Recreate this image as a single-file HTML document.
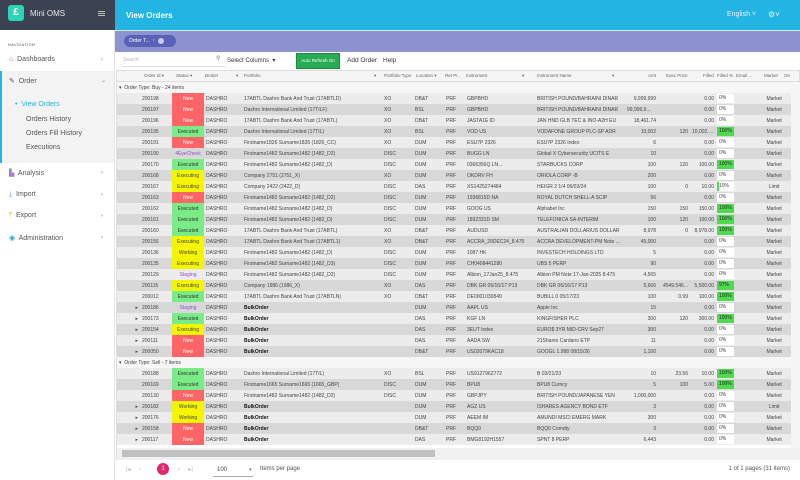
<!DOCTYPE html>
<html><head><meta charset="utf-8"><style>
*{box-sizing:border-box;margin:0;padding:0}
body{width:800px;height:480px;overflow:hidden;font-family:"Liberation Sans",sans-serif;background:#fff;position:relative}
.a{position:absolute}
#side{left:0;top:0;width:115px;height:480px;background:#fff;border-right:1px solid #e4e4e4}
#stop{left:0;top:0;width:115px;height:30px;background:#3b4352}
.logo{left:8px;top:5px;width:16px;height:16px;background:#2fd3b6;border-radius:3px;color:#fff;font-size:10px;font-weight:bold;text-align:center;line-height:16px}
.nav{left:9px;font-size:7px;color:#555}
.chev{left:101px;font-size:6px;color:#888}
#hdr{left:115px;top:0;width:685px;height:30px;background:#22b5e3}
#band{left:115px;top:30px;width:685px;height:22px;background:#8c93cf;border-top:1px solid #d8f0fa}
table{border-collapse:collapse;table-layout:fixed;font-size:5px;color:#444}
td{height:11px;padding:0 2px;white-space:nowrap;overflow:hidden;text-overflow:ellipsis}
tr.l td{background:#ececec}
tr.d td{background:#d8d8d8}
tr.g td{background:#f6f6f6;height:11px}
.r{text-align:right}.c{text-align:center}
.N{background:#ff6466!important;color:#fff;text-align:center}
.E{background:#79eb87!important;color:#333;text-align:center}
.X{background:#f5f500!important;color:#444;text-align:center}
.S{color:#8a4fc9;text-align:center}
.b{font-weight:bold;color:#111}
.p{padding:0 1px}
.p span{display:block;height:9px;background:#fff;line-height:9px;padding-left:2px}
.p span.f{background:#4fd94f;color:#222}
</style></head><body>
<div id="side" class="a"></div>
<div id="stop" class="a"></div>
<div class="a logo">£</div>
<div class="a" style="left:30px;top:9px;font-size:8px;color:#e8e8e8">Mini OMS</div>
<div class="a" style="left:98px;top:11px;width:7px;height:1px;background:#bbb;box-shadow:0 2px 0 #bbb,0 4px 0 #bbb"></div>
<div class="a" style="left:8px;top:42px;font-size:4px;color:#555;letter-spacing:.3px">NAVIGATION</div>
<div class="a nav" style="top:56px"><span style="color:#e55">⌂</span>&nbsp; Dashboards</div><div class="a chev" style="top:57px">›</div>
<div class="a" style="left:0;top:71px;width:114px;height:92px;background:#f3f3f3;border-left:2px solid #22b5e3"></div>
<div class="a nav" style="top:77px">✎&nbsp; Order</div><div class="a chev" style="top:77px">⌄</div>
<div class="a" style="left:15px;top:101px;font-size:7px;color:#22b5e3">•&nbsp; View Orders</div>
<div class="a" style="left:26px;top:116px;font-size:7px;color:#555">Orders History</div>
<div class="a" style="left:26px;top:130px;font-size:7px;color:#555">Orders Fill History</div>
<div class="a" style="left:26px;top:144px;font-size:7px;color:#555">Executions</div>
<div class="a nav" style="top:169px"><span style="color:#a07fd0">▙</span>&nbsp; Analysis</div><div class="a chev" style="top:170px">›</div>
<div class="a nav" style="top:191px"><span style="color:#4aa8e0">⤓</span>&nbsp; Import</div><div class="a chev" style="top:192px">›</div>
<div class="a nav" style="top:212px"><span style="color:#e8b830">⤒</span>&nbsp; Export</div><div class="a chev" style="top:213px">›</div>
<div class="a nav" style="top:234px"><span style="color:#2aa8e0">◉</span>&nbsp; Administration</div><div class="a chev" style="top:235px">›</div>

<div id="hdr" class="a"></div>
<div class="a" style="left:126px;top:11px;font-size:8px;font-weight:bold;color:#fff">View Orders</div>
<div class="a" style="left:727px;top:11px;font-size:7px;color:#eef">English ˅</div>
<div class="a" style="left:768px;top:10px;font-size:8px;color:#eef">⚙˅</div>
<div id="band" class="a"></div>
<div class="a" style="left:124px;top:35px;width:52px;height:12px;background:#5a62b8;border-radius:6px;color:#fff;font-size:5px;line-height:12px;padding-left:5px">Order T... &nbsp;↑ <span style="display:inline-block;width:6px;height:6px;border-radius:3px;background:#c9cbe8;vertical-align:middle;margin-left:2px"></span></div>
<div class="a" style="left:116px;top:52px;width:684px;height:18px;background:#fff"></div>
<div class="a" style="left:123px;top:57px;font-size:5px;color:#bbb">Search</div>
<div class="a" style="left:123px;top:66px;width:102px;height:1px;background:#ddd"></div>
<div class="a" style="left:216px;top:55px;font-size:6px;color:#777">⚲</div>
<div class="a" style="left:227px;top:57px;font-size:6px;color:#333">Select Columns &nbsp;▾</div>
<div class="a" style="left:296px;top:53px;width:44px;height:16px;background:#28ab55;border:1px solid #1e8a40;color:#fff;font-size:4.5px;line-height:14px;text-align:center">Auto Refresh On</div>
<div class="a" style="left:347px;top:57px;font-size:6.5px;color:#333">Add Order</div>
<div class="a" style="left:383px;top:57px;font-size:6.5px;color:#333">Help</div>

<div class="a" style="left:116px;top:70px;width:684px;height:12px;background:#f5f5f5;border:1px solid #ddd"></div>
<div class="a" style="left:116px;top:70px;width:684px;height:12px;font-size:4.5px;color:#666;line-height:12px">
<span class="a" style="left:28px">Order Id ▾</span><span class="a" style="left:60px">Status ▾</span><span class="a" style="left:89px">Broker</span><span class="a" style="left:120px">▾</span><span class="a" style="left:128px">Portfolio</span><span class="a" style="left:258px">▾</span><span class="a" style="left:268px">Portfolio Type</span><span class="a" style="left:300px">Location ▾</span><span class="a" style="left:329px">Ret Pr..</span><span class="a" style="left:350px">Instrument</span><span class="a" style="left:406px">▾</span><span class="a" style="left:421px">Instrument Name</span><span class="a" style="left:496px">▾</span><span class="a" style="left:532px">Amt</span><span class="a" style="left:550px">Exec Price</span><span class="a" style="left:587px">Filled</span><span class="a" style="left:601px">Filled %</span><span class="a" style="left:620px">Email ...</span><span class="a" style="left:648px">Market</span><span class="a" style="left:668px">On</span></div>

<table class="a" style="left:117px;top:82px;width:674px">
<colgroup><col style="width:23px"><col style="width:32px"><col style="width:32px"><col style="width:38px"><col style="width:140px"><col style="width:31px"><col style="width:31px"><col style="width:21px"><col style="width:70px"><col style="width:90px"><col style="width:33px"><col style="width:32px"><col style="width:26px"><col style="width:19px"><col style="width:22px"><col style="width:34px"></colgroup>
<tr class="g"><td colspan="16">▾&nbsp; Order Type: Buy - 24 items</td></tr>
<tr class="l"><td></td><td>200198</td><td class="N">New</td><td>DASHRO</td><td>17ABTL Dashro Bank And Trust (17ABTLD)</td><td>XO</td><td>DB&amp;T</td><td>PRF</td><td>GBPBHD</td><td>BRITISH POUND/BAHRAINI DINAR</td><td class="r">9,999,999</td><td></td><td class="r">0.00</td><td class="p"><span>0%</span></td><td></td><td class="c">Market</td></tr>
<tr class="d"><td></td><td>200197</td><td class="N">New</td><td>DASHRO</td><td>Dashro International Limited (17TILF)</td><td>XO</td><td>BSL</td><td>PRF</td><td>GBPBHD</td><td>BRITISH POUND/BAHRAINI DINAR</td><td>99,999,9...</td><td></td><td class="r">0.00</td><td class="p"><span>0%</span></td><td></td><td class="c">Market</td></tr>
<tr class="l"><td></td><td>200196</td><td class="N">New</td><td>DASHRO</td><td>17ABTL Dashro Bank And Trust (17ABTL)</td><td>XO</td><td>DB&amp;T</td><td>PRF</td><td>JASTA1E ID</td><td>JAN HND GLB TEC &amp; INO-A2H EU</td><td class="r">18,461.74</td><td></td><td class="r">0.00</td><td class="p"><span>0%</span></td><td></td><td class="c">Market</td></tr>
<tr class="d"><td></td><td>200195</td><td class="E">Executed</td><td>DASHRO</td><td>Dashro International Limited (17TIL)</td><td>XO</td><td>BSL</td><td>PRF</td><td>VOD US</td><td>VODAFONE GROUP PLC-SP ADR</td><td class="r">10,002</td><td class="r">120</td><td class="r">10,002.00</td><td class="p"><span class="f">100%</span></td><td></td><td class="c">Market</td></tr>
<tr class="l"><td></td><td>200191</td><td class="N">New</td><td>DASHRO</td><td>Firstname1826 Surname1826 (1826_CC)</td><td>XO</td><td>DUM</td><td>PRF</td><td>ESU7P 2326</td><td>ESU7P 2326 Index</td><td class="r">6</td><td></td><td class="r">0.00</td><td class="p"><span>0%</span></td><td></td><td class="c">Market</td></tr>
<tr class="d"><td></td><td>200190</td><td class="S">4EyeCheck</td><td>DASHRO</td><td>Firstname1482 Surname1482 (1482_D2)</td><td>DISC</td><td>DUM</td><td>PRF</td><td>BUGG LN</td><td>Global X Cybersecurity UCITS E</td><td class="r">10</td><td></td><td class="r">0.00</td><td class="p"><span>0%</span></td><td></td><td class="c">Market</td></tr>
<tr class="l"><td></td><td>200170</td><td class="E">Executed</td><td>DASHRO</td><td>Firstname1482 Surname1482 (1482_D)</td><td>DISC</td><td>DUM</td><td>PRF</td><td>0366356Q LN...</td><td>STARBUCKS CORP</td><td class="r">100</td><td class="r">120</td><td class="r">100.00</td><td class="p"><span class="f">100%</span></td><td></td><td class="c">Market</td></tr>
<tr class="d"><td></td><td>200168</td><td class="X">Executing</td><td>DASHRO</td><td>Company 2751 (2751_X)</td><td>XO</td><td>DUM</td><td>PRF</td><td>OKDRV FH</td><td>ORIOLA CORP -B</td><td class="r">200</td><td></td><td class="r">0.00</td><td class="p"><span>0%</span></td><td></td><td class="c">Market</td></tr>
<tr class="l"><td></td><td>200167</td><td class="X">Executing</td><td>DASHRO</td><td>Company 2422 (2422_D)</td><td>DISC</td><td>DAS</td><td>PRF</td><td>XS1425274484</td><td>HEIGR 2 1/4 06/03/24</td><td class="r">100</td><td class="r">0</td><td class="r">10.00</td><td class="p"><span style="background:linear-gradient(90deg,#4fd94f 2px,#fff 2px)">10%</span></td><td></td><td class="c">Limit</td></tr>
<tr class="d"><td></td><td>200163</td><td class="N">New</td><td>DASHRO</td><td>Firstname1482 Surname1482 (1482_D2)</td><td>DISC</td><td>DUM</td><td>PRF</td><td>1936815D NA</td><td>ROYAL DUTCH SHELL-A SCIP</td><td class="r">56</td><td></td><td class="r">0.00</td><td class="p"><span>0%</span></td><td></td><td class="c">Market</td></tr>
<tr class="l"><td></td><td>200162</td><td class="E">Executed</td><td>DASHRO</td><td>Firstname1482 Surname1482 (1482_D)</td><td>DISC</td><td>DUM</td><td>PRF</td><td>GOOG US</td><td>Alphabet Inc</td><td class="r">150</td><td class="r">150</td><td class="r">150.00</td><td class="p"><span class="f">100%</span></td><td></td><td class="c">Market</td></tr>
<tr class="d"><td></td><td>200161</td><td class="E">Executed</td><td>DASHRO</td><td>Firstname1482 Surname1482 (1482_D)</td><td>DISC</td><td>DUM</td><td>PRF</td><td>1892331D SM</td><td>TELEFONICA SA-INTERIM</td><td class="r">100</td><td class="r">120</td><td class="r">100.00</td><td class="p"><span class="f">100%</span></td><td></td><td class="c">Market</td></tr>
<tr class="l"><td></td><td>200160</td><td class="E">Executed</td><td>DASHRO</td><td>17ABTL Dashro Bank And Trust (17ABTL)</td><td>XO</td><td>DB&amp;T</td><td>PRF</td><td>AUDUSD</td><td>AUSTRALIAN DOLLAR/US DOLLAR</td><td class="r">8,978</td><td class="r">0</td><td class="r">8,978.00</td><td class="p"><span class="f">100%</span></td><td></td><td class="c">Market</td></tr>
<tr class="d"><td></td><td>200156</td><td class="X">Executing</td><td>DASHRO</td><td>17ABTL Dashro Bank And Trust (17ABTL1)</td><td>XO</td><td>DB&amp;T</td><td>PRF</td><td>ACCRA_20DEC24_8.475</td><td>ACCRA DEVELOPMENT-PM Note 20...</td><td class="r">45,000</td><td></td><td class="r">0.00</td><td class="p"><span>0%</span></td><td></td><td class="c">Market</td></tr>
<tr class="l"><td></td><td>200136</td><td class="X">Working</td><td>DASHRO</td><td>Firstname1482 Surname1482 (1482_D)</td><td>DISC</td><td>DUM</td><td>PRF</td><td>1087 HK</td><td>INVESTECH HOLDINGS LTD</td><td class="r">5</td><td></td><td class="r">0.00</td><td class="p"><span>0%</span></td><td></td><td class="c">Market</td></tr>
<tr class="d"><td></td><td>200135</td><td class="X">Executing</td><td>DASHRO</td><td>Firstname1482 Surname1482 (1482_D3)</td><td>DISC</td><td>DUM</td><td>PRF</td><td>CH0408441280</td><td>UBS 5 PERP</td><td class="r">90</td><td></td><td class="r">0.00</td><td class="p"><span>0%</span></td><td></td><td class="c">Market</td></tr>
<tr class="l"><td></td><td>200129</td><td class="S">Staging</td><td>DASHRO</td><td>Firstname1482 Surname1482 (1482_D2)</td><td>DISC</td><td>DUM</td><td>PRF</td><td>Albion_17Jan25_8.475</td><td>Albion PM Note 17-Jan-2025 8.475</td><td class="r">4,565</td><td></td><td class="r">0.00</td><td class="p"><span>0%</span></td><td></td><td class="c">Market</td></tr>
<tr class="d"><td></td><td>200115</td><td class="X">Executing</td><td>DASHRO</td><td>Company 1986 (1986_X)</td><td>XO</td><td>DAS</td><td>PRF</td><td>DBK GR 06/16/17 P13</td><td>DBK GR 06/16/17 P13</td><td class="r">5,666</td><td class="r">4549.546...</td><td class="r">5,500.00</td><td class="p"><span class="f">97%</span></td><td></td><td class="c">Market</td></tr>
<tr class="l"><td></td><td>200012</td><td class="E">Executed</td><td>DASHRO</td><td>17ABTL Dashro Bank And Trust (17ABTLN)</td><td>XO</td><td>DB&amp;T</td><td>PRF</td><td>DE0001030849</td><td>BUBILL 0 05/17/23</td><td class="r">100</td><td class="r">0.99</td><td class="r">100.00</td><td class="p"><span class="f">100%</span></td><td></td><td class="c">Market</td></tr>
<tr class="d"><td class="r">▸</td><td>200186</td><td class="S">Staging</td><td>DASHRO</td><td class="b">BulkOrder</td><td></td><td>DUM</td><td>PRF</td><td>AAPL US</td><td>Apple Inc</td><td class="r">15</td><td></td><td class="r">0.00</td><td class="p"><span>0%</span></td><td></td><td class="c">Market</td></tr>
<tr class="l"><td class="r">▸</td><td>200173</td><td class="E">Executed</td><td>DASHRO</td><td class="b">BulkOrder</td><td></td><td>DAS</td><td>PRF</td><td>KGF LN</td><td>KINGFISHER PLC</td><td class="r">300</td><td class="r">120</td><td class="r">300.00</td><td class="p"><span class="f">100%</span></td><td></td><td class="c">Market</td></tr>
<tr class="d"><td class="r">▸</td><td>200154</td><td class="X">Executing</td><td>DASHRO</td><td class="b">BulkOrder</td><td></td><td>DAS</td><td>PRF</td><td>3EUT Index</td><td>EURO$ 3YR MID-CRV Sep27</td><td class="r">300</td><td></td><td class="r">0.00</td><td class="p"><span>0%</span></td><td></td><td class="c">Market</td></tr>
<tr class="l"><td class="r">▸</td><td>200111</td><td class="N">New</td><td>DASHRO</td><td class="b">BulkOrder</td><td></td><td>DAS</td><td>PRF</td><td>AADA SW</td><td>21Shares Cardano ETP</td><td class="r">11</td><td></td><td class="r">0.00</td><td class="p"><span>0%</span></td><td></td><td class="c">Market</td></tr>
<tr class="d"><td class="r">▸</td><td>200050</td><td class="N">New</td><td>DASHRO</td><td class="b">BulkOrder</td><td></td><td>DB&amp;T</td><td>PRF</td><td>US02079KAC18</td><td>GOOGL 1.998 08/15/26</td><td class="r">1,100</td><td></td><td class="r">0.00</td><td class="p"><span>0%</span></td><td></td><td class="c">Market</td></tr>
<tr class="g"><td colspan="16">▾&nbsp; Order Type: Sell - 7 items</td></tr>
<tr class="l"><td></td><td>200188</td><td class="E">Executed</td><td>DASHRO</td><td>Dashro International Limited (17TIL)</td><td>XO</td><td>BSL</td><td>PRF</td><td>US912796Z772</td><td>B 03/21/23</td><td class="r">10</td><td class="r">23.56</td><td class="r">10.00</td><td class="p"><span class="f">100%</span></td><td></td><td class="c">Market</td></tr>
<tr class="d"><td></td><td>200169</td><td class="E">Executed</td><td>DASHRO</td><td>Firstname1665 Surname1665 (1665_GBP)</td><td>DISC</td><td>DUM</td><td>PRF</td><td>BPU8</td><td>BPU8 Curncy</td><td class="r">5</td><td class="r">100</td><td class="r">5.00</td><td class="p"><span class="f">100%</span></td><td></td><td class="c">Market</td></tr>
<tr class="l"><td></td><td>200130</td><td class="N">New</td><td>DASHRO</td><td>Firstname1482 Surname1482 (1482_D2)</td><td>DISC</td><td>DUM</td><td>PRF</td><td>GBPJPY</td><td>BRITISH POUND/JAPANESE YEN</td><td class="r">1,000,000</td><td></td><td class="r">0.00</td><td class="p"><span>0%</span></td><td></td><td class="c">Market</td></tr>
<tr class="d"><td class="r">▸</td><td>200182</td><td class="X">Working</td><td>DASHRO</td><td class="b">BulkOrder</td><td></td><td>DUM</td><td>PRF</td><td>AGZ US</td><td>ISHARES AGENCY BOND ETF</td><td class="r">3</td><td></td><td class="r">0.00</td><td class="p"><span>0%</span></td><td></td><td class="c">Limit</td></tr>
<tr class="l"><td class="r">▸</td><td>200176</td><td class="X">Working</td><td>DASHRO</td><td class="b">BulkOrder</td><td></td><td>DUM</td><td>PRF</td><td>AEEM IM</td><td>AMUNDI MSCI EMERG MARK</td><td class="r">300</td><td></td><td class="r">0.00</td><td class="p"><span>0%</span></td><td></td><td class="c">Market</td></tr>
<tr class="d"><td class="r">▸</td><td>200158</td><td class="N">New</td><td>DASHRO</td><td class="b">BulkOrder</td><td></td><td>DB&amp;T</td><td>PRF</td><td>BQQ0</td><td>BQQ0 Comdty</td><td class="r">3</td><td></td><td class="r">0.00</td><td class="p"><span>0%</span></td><td></td><td class="c">Market</td></tr>
<tr class="l"><td class="r">▸</td><td>200117</td><td class="N">New</td><td>DASHRO</td><td class="b">BulkOrder</td><td></td><td>DAS</td><td>PRF</td><td>BMG8192H1557</td><td>SPNT 8 PERP</td><td class="r">6,443</td><td></td><td class="r">0.00</td><td class="p"><span>0%</span></td><td></td><td class="c">Market</td></tr>
</table>
<div class="a" style="left:791px;top:82px;width:9px;height:368px;background:#f5f5f5"></div>
<div class="a" style="left:116px;top:448px;width:684px;height:12px;background:#f1f1f1"></div>
<div class="a" style="left:122px;top:450px;width:313px;height:7px;background:#c1c1c1"></div>
<div class="a" style="left:116px;top:82px;width:1px;height:378px;background:#ddd"></div>
<div class="a" style="left:126px;top:466px;font-size:6px;color:#bbb">|◂ &nbsp;&nbsp;&nbsp; ‹</div>
<div class="a" style="left:157px;top:463px;width:12px;height:12px;border-radius:6px;background:#e0266c;color:#fff;font-size:6px;text-align:center;line-height:12px">1</div>
<div class="a" style="left:178px;top:466px;font-size:6px;color:#bbb">› &nbsp;&nbsp;&nbsp; ▸|</div>
<div class="a" style="left:217px;top:467px;font-size:6px;color:#444">100</div>
<div class="a" style="left:213px;top:476px;width:40px;height:1px;background:#aaa"></div>
<div class="a" style="left:249px;top:467px;font-size:5px;color:#666">▾</div>
<div class="a" style="left:260px;top:466px;font-size:6px;color:#555">Items per page</div>
<div class="a" style="left:700px;top:466px;width:90px;text-align:right;font-size:6px;color:#555">1 of 1 pages (31 items)</div>
</body></html>
